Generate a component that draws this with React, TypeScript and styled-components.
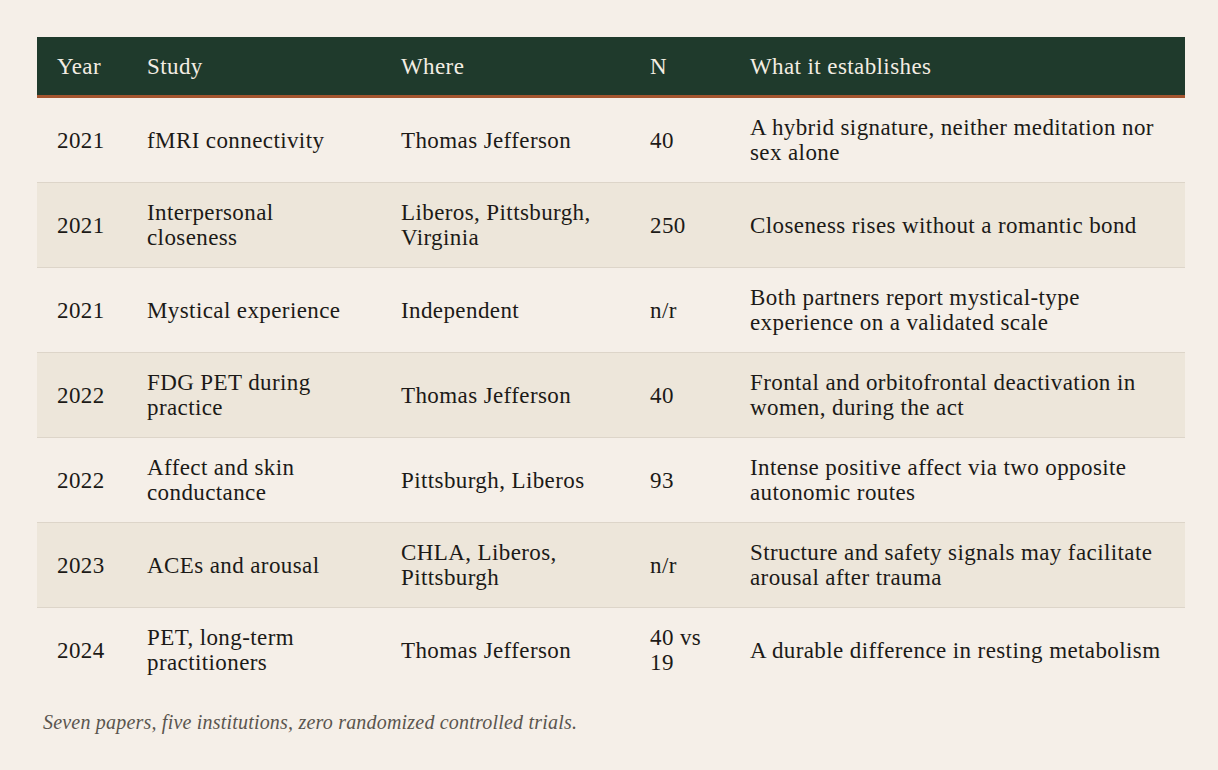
import styled, { createGlobalStyle } from "styled-components";

const GlobalStyle = createGlobalStyle`
  body {
    margin: 0;
    background: #f5efe8;
    font-family: "Liberation Serif", "DejaVu Serif", serif;
    color: #1c1a17;
  }
`;

const Page = styled.div`
  padding: 37px 33px 0 37px;
`;

const Table = styled.table`
  width: 1148px;
  table-layout: fixed;
  border-collapse: collapse;
  font-size: 23px;
  letter-spacing: 0.4px;
  line-height: 25px;
`;

const HeadRow = styled.tr`
  background: #1f3a2c;
  border-bottom: 3px solid #a4552f;
`;

const Th = styled.th<{ $w: number }>`
  box-sizing: border-box;
  width: ${(p) => p.$w}px;
  padding: 17px 20px 16px;
  text-align: left;
  font-weight: 400;
  color: #f3ede3;
`;

const Row = styled.tr<{ $alt: boolean }>`
  background: ${(p) => (p.$alt ? "#ede6da" : "#f5efe8")};
  border-bottom: 1px solid #ddd5c9;

  &:last-child {
    border-bottom: none;
  }
`;

const Td = styled.td`
  padding: 17px 20px;
  vertical-align: middle;
`;

const Caption = styled.p`
  margin: 19px 0 0 6px;
  font-style: italic;
  font-size: 20px;
  letter-spacing: 0.2px;
  color: #5a554e;
`;

const columns = [
  { label: "Year", w: 90 },
  { label: "Study", w: 254 },
  { label: "Where", w: 249 },
  { label: "N", w: 100 },
  { label: "What it establishes", w: 455 },
];

const rows = [
  ["2021", "fMRI connectivity", "Thomas Jefferson", "40", "A hybrid signature, neither meditation nor sex alone"],
  ["2021", "Interpersonal closeness", "Liberos, Pittsburgh, Virginia", "250", "Closeness rises without a romantic bond"],
  ["2021", "Mystical experience", "Independent", "n/r", "Both partners report mystical-type experience on a validated scale"],
  ["2022", "FDG PET during practice", "Thomas Jefferson", "40", "Frontal and orbitofrontal deactivation in women, during the act"],
  ["2022", "Affect and skin conductance", "Pittsburgh, Liberos", "93", "Intense positive affect via two opposite autonomic routes"],
  ["2023", "ACEs and arousal", "CHLA, Liberos, Pittsburgh", "n/r", "Structure and safety signals may facilitate arousal after trauma"],
  ["2024", "PET, long-term practitioners", "Thomas Jefferson", "40 vs 19", "A durable difference in resting metabolism"],
];

export default function App() {
  return (
    <Page>
      <GlobalStyle />
      <Table>
        <thead>
          <HeadRow>
            {columns.map((c) => (
              <Th key={c.label} $w={c.w}>
                {c.label}
              </Th>
            ))}
          </HeadRow>
        </thead>
        <tbody>
          {rows.map((r, i) => (
            <Row key={i} $alt={i % 2 === 1}>
              {r.map((cell, j) => (
                <Td key={j}>{cell}</Td>
              ))}
            </Row>
          ))}
        </tbody>
      </Table>
      <Caption>Seven papers, five institutions, zero randomized controlled trials.</Caption>
    </Page>
  );
}
